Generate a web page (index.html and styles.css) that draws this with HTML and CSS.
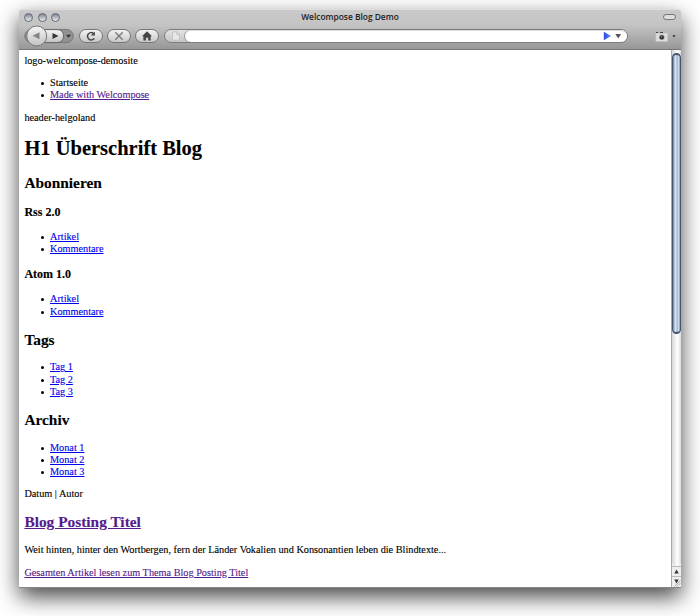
FILE: index.html
```html
<!DOCTYPE html>
<html lang="de">
<head>
<meta charset="utf-8">
<title>Welcompose Blog Demo</title>
<link rel="stylesheet" href="styles.css">
</head>
<body>
<div class="window">
  <header class="chrome">
    <div class="titlebar">
      <div class="lights"><i></i><i></i><i></i></div>
      <span class="title">Welcompose Blog Demo</span>
      <i class="pill"></i>
    </div>
    <div class="toolbar">
      <svg class="history" width="51" height="22" viewBox="0 0 51 22">
        <defs><linearGradient id="metal" x2="0" y2="1"><stop stop-color="#f5f5f5"/><stop offset="1" stop-color="#c2c2c2"/></linearGradient></defs>
        <rect x=".8" y="4.6" width="48.4" height="13" rx="6.5" fill="#929292" stroke="#777"/>
        <path d="M16 4.6h17q6.500 0 6.500 6.500t-6.500 6.500H16z" fill="url(#metal)" stroke="#666"/>
        <circle cx="12.700" cy="11" r="10" fill="url(#metal)" stroke="#777"/>
        <path d="M15.500 7.200v7L8.500 10.700z" fill="#858585"/>
        <path d="M28.500 8v6l6-3z" fill="#333"/>
        <path d="M42 9.800h5l-2.500 3z" fill="#333"/>
      </svg>
      <span class="button"><svg width="12" height="12" viewBox="0 0 12 12"><path d="M9.300 8.300A3.700 3.700 0 1 1 8.300 3.200" fill="none" stroke="#444" stroke-width="1.500"/><path d="M9.900 1.600v4H5.900z" fill="#444"/></svg></span>
      <span class="button"><svg width="12" height="12" viewBox="0 0 12 12"><path d="M2.300 2.300l7.400 7.400M9.700 2.300L2.300 9.700" stroke="#777" stroke-width="1.300"/></svg></span>
      <span class="button"><svg width="12" height="12" viewBox="0 0 12 12"><path d="M6 1.200l5 5H9.700v4.300H7.200V7.700H4.900v2.800H2.400V6.200H1z" fill="#444"/></svg></span>
      <div class="address">
        <svg class="page-icon" width="10" height="10" viewBox="0 0 10 10"><path d="M1.500.8h4.300l2.700 2.700v5.700h-7z" fill="#e8e8e8" stroke="#bdbdbd" stroke-width=".8"/><path d="M5.800.8v2.700h2.700" fill="none" stroke="#bdbdbd" stroke-width=".8"/></svg>
        <div class="field">
          <svg width="20" height="10" viewBox="0 0 20 10"><defs><linearGradient id="go"><stop stop-color="#2d4bdb"/><stop offset="1" stop-color="#5c86ff"/></linearGradient></defs><path d="M.8.800v8.400L8 5z" fill="url(#go)"/><path d="M12.300 3h5.800l-2.900 4.500z" fill="#555"/></svg>
        </div>
      </div>
      <svg class="camera" width="22" height="12" viewBox="0 0 22 12"><rect x=".7" y="2" width="12" height="8.500" rx=".6" fill="#ddd" stroke="#bbb" stroke-width=".5"/><path d="M1 1.500h2M5 1.500h3" stroke="#444"/><circle cx="6.800" cy="6.300" r="2.700" fill="#888"/><circle cx="6.800" cy="6.300" r="1.900" fill="#222"/><circle cx="6.600" cy="6" r=".7" fill="#aaa"/><path d="M17.300 4.200h3.400L19 6.500z" fill="#333"/></svg>
    </div>
  </header>
  <div class="viewport">
    <main class="page">
      <div>logo-welcompose-demosite</div>
      <ul><li>Startseite</li><li><a class="visited" href="#">Made with Welcompose</a></li></ul>
      <div>header-helgoland</div>
      <h1>H1 Überschrift Blog</h1>
      <h2>Abonnieren</h2>
      <h3>Rss 2.0</h3>
      <ul><li><a href="#">Artikel</a></li><li><a href="#">Kommentare</a></li></ul>
      <h3>Atom 1.0</h3>
      <ul><li><a href="#">Artikel</a></li><li><a href="#">Kommentare</a></li></ul>
      <h2>Tags</h2>
      <ul><li><a href="#">Tag 1</a></li><li><a href="#">Tag 2</a></li><li><a href="#">Tag 3</a></li></ul>
      <h2>Archiv</h2>
      <ul><li><a href="#">Monat 1</a></li><li><a href="#">Monat 2</a></li><li><a href="#">Monat 3</a></li></ul>
      <p>Datum | Autor</p>
      <h2><a class="visited" href="#">Blog Posting Titel</a></h2>
      <p>Weit hinten, hinter den Wortbergen, fern der Länder Vokalien und Konsonantien leben die Blindtexte...</p>
      <p><a class="visited" href="#">Gesamten Artikel lesen zum Thema Blog Posting Titel</a></p>
    </main>
    <div class="scrollbar">
      <div class="track"><div class="thumb"></div></div>
      <svg width="9" height="21" viewBox="0 0 9 21"><path d="M0 .5h9M0 10.500h9" stroke="#bbb"/><path d="M4.500 3.500l2.200 4H2.300zM2.300 13.500h4.400l-2.200 4z" fill="#333"/><path d="M2.500 20.500l6-6M5 20.500l3.500-3.500" stroke="#999" stroke-width=".8"/></svg>
    </div>
  </div>
</div>
</body>
</html>
```
FILE: styles.css
```css
* { box-sizing: border-box; }
body { margin: 0; height: 616px; padding: 9px 19px 0; background: #fff; overflow: hidden; }
.window {
  width: 662px; height: 579px; display: flex; flex-direction: column;
  border-bottom: 1px solid #858585; border-radius: 3px 3px 0 0;
  box-shadow: 0 9px 22px rgba(0, 0, 0, .72);
  background: #fff;
}
.chrome {
  height: 41px; flex: none; border-bottom: 1px solid #777; border-top: 1px solid #ddd;
  border-radius: 3px 3px 0 0;
  background: linear-gradient(#cacaca, #c3c3c3 40%, #979797);
}
.titlebar { height: 14px; display: flex; align-items: center; justify-content: space-between; padding: 0 5px; }
.lights { display: flex; gap: 4.500px; width: 50px; }
.lights i { width: 9px; height: 9px; border: 1px solid #626873; border-radius: 50%; background: linear-gradient(#7e858f, #b0b5bc 45%, #eceef1); }
.title { font: 600 8.400px/14px "Open Sans", sans-serif; color: #222; white-space: nowrap; }
.pill { width: 13px; height: 6px; margin-left: 37px; border: 1px solid #777; border-radius: 3px; background: #ddd; }
.toolbar { height: 24px; display: flex; align-items: center; padding-left: 5px; }
.history { margin-right: 4px; }
.button {
  width: 24px; height: 14px; margin-right: 4px; display: flex; align-items: center; justify-content: center;
  border: 1px solid #777; border-radius: 7px; background: linear-gradient(#f2f2f2, #c8c8c8);
}
.address {
  width: 464px; height: 14px; margin-left: 1px; display: flex; align-items: center;
  border: 1px solid #7c7c7c; border-radius: 7px; background: linear-gradient(#e4e4e4, #c6c6c6);
}
.page-icon { margin: 0 4px 0 6px; }
.field { flex: 1; height: 12px; display: flex; justify-content: flex-end; align-items: center; padding-right: 4px; border-radius: 6px; background: #fff; box-shadow: inset 0 1px 0 #ddd, -1px 0 0 #999; }
.camera { margin: 2px 0 0 27px; }
.viewport { flex: 1; min-height: 0; display: flex; }
.page {
  flex: 1; padding: 4.600px 5.400px; overflow: hidden;
  font: 10.250px/12.200px "Liberation Serif", serif; color: #000;
  -webkit-text-stroke: .12px;
}
.page ul { margin: 10.250px 0; padding-left: 25.600px; list-style: none; }
.page li { display: flex; align-items: center; }
.page li::before { content: ""; width: 3px; height: 3px; margin: 1px 6px 0 -9px; flex: none; border-radius: 50%; background: #000; }
.page p { margin: 10.250px 0; }
.page a { color: #00e; text-decoration: underline; }
.page .visited { color: #551a8b; }
h1, h2, h3 { font-weight: bold; }
h1 { font-size: 20.500px; line-height: 24px; margin: 12.500px 0 13.700px; }
h2 { font-size: 15.380px; line-height: 18px; margin: 12.800px 0; }
h3 { font-size: 12px; line-height: 14px; margin: 12px 0; }
.scrollbar { width: 10px; display: flex; flex-direction: column; border-left: 1px solid #aaa; border-right: 0; background: #eee; }
.track { flex: 1; padding-top: 3px; background: linear-gradient(90deg, #d6d6d6, #fff 60%, #ddd); border-radius: 0 0 5px 5px; }
.thumb {
  height: 281px; border: 1px solid #425370; border-width: 2px 1px; border-radius: 5px;
  background: linear-gradient(90deg, #73829b, #dde6f2 35%, #a3b4cc 60%, #d0dded 80%, #8292ad);
}
```
